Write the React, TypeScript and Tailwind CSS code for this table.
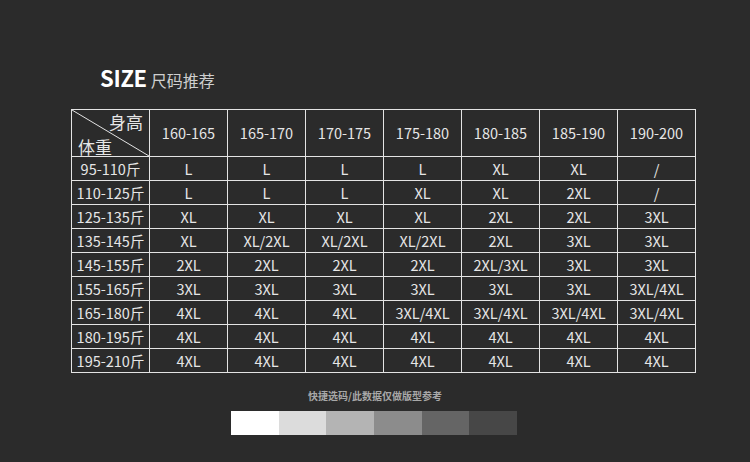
import React from 'react';

const heights = ['160-165', '165-170', '170-175', '175-180', '180-185', '185-190', '190-200'];

const rows: { w: string; s: string[] }[] = [
  { w: '95-110斤', s: ['L', 'L', 'L', 'L', 'XL', 'XL', '/'] },
  { w: '110-125斤', s: ['L', 'L', 'L', 'XL', 'XL', '2XL', '/'] },
  { w: '125-135斤', s: ['XL', 'XL', 'XL', 'XL', '2XL', '2XL', '3XL'] },
  { w: '135-145斤', s: ['XL', 'XL/2XL', 'XL/2XL', 'XL/2XL', '2XL', '3XL', '3XL'] },
  { w: '145-155斤', s: ['2XL', '2XL', '2XL', '2XL', '2XL/3XL', '3XL', '3XL'] },
  { w: '155-165斤', s: ['3XL', '3XL', '3XL', '3XL', '3XL', '3XL', '3XL/4XL'] },
  { w: '165-180斤', s: ['4XL', '4XL', '4XL', '3XL/4XL', '3XL/4XL', '3XL/4XL', '3XL/4XL'] },
  { w: '180-195斤', s: ['4XL', '4XL', '4XL', '4XL', '4XL', '4XL', '4XL'] },
  { w: '195-210斤', s: ['4XL', '4XL', '4XL', '4XL', '4XL', '4XL', '4XL'] },
];

const swatches = ['bg-[#ffffff]', 'bg-[#dcdcdc]', 'bg-[#b4b4b4]', 'bg-[#8c8c8c]', 'bg-[#656565]', 'bg-[#474747]'];

export default function App() {
  return (
    <div className="w-[750px] h-[462px] bg-[#2b2b2b] overflow-hidden pt-[63px] text-[#e6e6e6] font-['Noto_Sans_CJK_SC',sans-serif]">
      <div className="pl-[100px] flex items-baseline h-[28px] leading-[28px]">
        <span className="text-[22px] font-bold text-white tracking-[-0.3px]">SIZE</span>
        <span className="ml-[4px] text-[16px] text-[#cfcfcf]">尺码推荐</span>
      </div>

      <table className="mt-[18px] ml-[71px] table-fixed border-collapse w-[625px] text-[14.5px]">
        <tbody>
          <tr className="h-[47px]">
            <td className="relative border border-[#e4e4e4] p-0 w-[78px]">
              <svg className="absolute inset-0 w-full h-full" preserveAspectRatio="none" viewBox="0 0 100 100">
                <line x1="0" y1="0" x2="100" y2="100" stroke="#e4e4e4" strokeWidth="1" vectorEffect="non-scaling-stroke" />
              </svg>
              <div className="flex flex-col h-[46px] px-[6px] text-[17px] leading-[20px]">
                <span className="self-end mt-[2px]">身高</span>
                <span className="self-start mt-[5px]">体重</span>
              </div>
            </td>
            {heights.map((h) => (
              <td key={h} className="border border-[#e4e4e4] text-center p-0">{h}</td>
            ))}
          </tr>
          {rows.map((r) => (
            <tr key={r.w} className="h-[24px]">
              <td className="border border-[#e4e4e4] text-center p-0 leading-[22px]">{r.w}</td>
              {r.s.map((v, i) => (
                <td key={i} className="border border-[#e4e4e4] text-center p-0 leading-[22px]">{v}</td>
              ))}
            </tr>
          ))}
        </tbody>
      </table>

      <div className="mt-[16px] text-center text-[10px] font-bold text-[#a8a8a8] leading-[14px]">
        快捷选码/此数据仅做版型参考
      </div>
      <div className="mt-[8px] ml-[231px] flex w-[286px] h-[24px]">
        {swatches.map((c) => (
          <div key={c} className={`flex-1 ${c}`} />
        ))}
      </div>
    </div>
  );
}
